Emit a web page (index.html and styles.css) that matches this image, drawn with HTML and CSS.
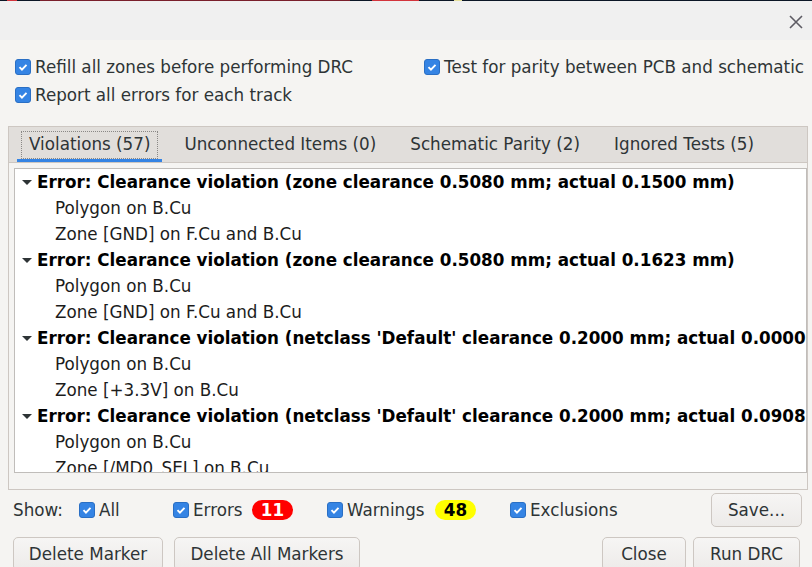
FILE: index.html
```html
<!DOCTYPE html>
<html>
<head>
<meta charset="utf-8">
<link rel="stylesheet" href="styles.css">
</head>
<body>
<div class="topline">
  <span class="seg dark" style="width:7px"></span><span class="seg red" style="width:10px"></span><span class="seg dark" style="width:23px"></span><span class="seg maroon" style="width:310px"></span><span class="seg dark" style="width:22px"></span><span class="seg red" style="width:47px"></span><span class="seg dark" style="width:35px"></span><span class="seg yellow" style="width:8px"></span><span class="seg dark fill"></span>
</div>
<div class="titlebar">
  <svg class="closex" width="14" height="14" viewBox="0 0 14 14"><path d="M1 1 L13 13 M13 1 L1 13" stroke="#5e5c64" stroke-width="1.6" fill="none"/></svg>
</div>
<div class="body">
  <div class="opts">
    <div class="optcol">
      <label class="chk"><span class="box"><svg viewBox="0 0 16 16"><path d="M4 8.2 L6.8 11 L12 5.6" stroke="#fff" stroke-width="2.2" fill="none"/></svg></span>Refill all zones before performing DRC</label>
      <label class="chk"><span class="box"><svg viewBox="0 0 16 16"><path d="M4 8.2 L6.8 11 L12 5.6" stroke="#fff" stroke-width="2.2" fill="none"/></svg></span>Report all errors for each track</label>
    </div>
    <div class="optcol right">
      <label class="chk"><span class="box"><svg viewBox="0 0 16 16"><path d="M4 8.2 L6.8 11 L12 5.6" stroke="#fff" stroke-width="2.2" fill="none"/></svg></span>Test for parity between PCB and schematic</label>
    </div>
  </div>
  <div class="notebook">
    <div class="tabs">
      <div class="tab active"><span class="focus">Violations (57)</span></div>
      <div class="tab">Unconnected Items (0)</div>
      <div class="tab">Schematic Parity (2)</div>
      <div class="tab">Ignored Tests (5)</div>
    </div>
    <div class="page">
      <div class="tree">
        <div class="row parent"><span class="arrow"></span>Error: Clearance violation (zone clearance 0.5080 mm; actual 0.1500 mm)</div>
        <div class="row child">Polygon on B.Cu</div>
        <div class="row child">Zone [GND] on F.Cu and B.Cu</div>
        <div class="row parent"><span class="arrow"></span>Error: Clearance violation (zone clearance 0.5080 mm; actual 0.1623 mm)</div>
        <div class="row child">Polygon on B.Cu</div>
        <div class="row child">Zone [GND] on F.Cu and B.Cu</div>
        <div class="row parent"><span class="arrow"></span>Error: Clearance violation (netclass 'Default' clearance 0.2000 mm; actual 0.0000 mm)</div>
        <div class="row child">Polygon on B.Cu</div>
        <div class="row child">Zone [+3.3V] on B.Cu</div>
        <div class="row parent"><span class="arrow"></span>Error: Clearance violation (netclass 'Default' clearance 0.2000 mm; actual 0.0908 mm)</div>
        <div class="row child">Polygon on B.Cu</div>
        <div class="row child">Zone [/MD0_SEL] on B.Cu</div>
      </div>
    </div>
  </div>
  <div class="showrow">
    <span class="showlbl">Show:</span>
    <label class="chk f-all"><span class="box"><svg viewBox="0 0 16 16"><path d="M4 8.2 L6.8 11 L12 5.6" stroke="#fff" stroke-width="2.2" fill="none"/></svg></span>All</label>
    <label class="chk f-err"><span class="box"><svg viewBox="0 0 16 16"><path d="M4 8.2 L6.8 11 L12 5.6" stroke="#fff" stroke-width="2.2" fill="none"/></svg></span>Errors</label>
    <span class="badge red">11</span>
    <label class="chk f-warn"><span class="box"><svg viewBox="0 0 16 16"><path d="M4 8.2 L6.8 11 L12 5.6" stroke="#fff" stroke-width="2.2" fill="none"/></svg></span>Warnings</label>
    <span class="badge yellow">48</span>
    <label class="chk f-excl"><span class="box"><svg viewBox="0 0 16 16"><path d="M4 8.2 L6.8 11 L12 5.6" stroke="#fff" stroke-width="2.2" fill="none"/></svg></span>Exclusions</label>
    <span class="spacer"></span>
    <button class="btn save">Save...</button>
  </div>
  <div class="btnrow">
    <button class="btn b-del">Delete Marker</button>
    <button class="btn b-delall">Delete All Markers</button>
    <span class="spacer"></span>
    <button class="btn b-close">Close</button>
    <button class="btn b-run">Run DRC</button>
  </div>
</div>
</body>
</html>
```
FILE: styles.css
```css
* { box-sizing: border-box; }
html, body { margin: 0; padding: 0; }
body {
  width: 812px;
  height: 567px;
  overflow: hidden;
  background: #f5f4f2;
  font-family: "DejaVu Sans", sans-serif;
  font-size: 16.75px;
  color: #2e3436;
}
.topline { display: flex; height: 1px; }
.seg { display: block; height: 1px; }
.seg.dark { background: #0b1626; }
.seg.red { background: #d3343c; }
.seg.maroon { background: #7a1f2b; }
.seg.yellow { background: #e6e09c; }
.seg.fill { flex: 1; }
.titlebar {
  height: 39px;
  background: #f0f0f0;
  display: flex;
  justify-content: flex-end;
  align-items: center;
  padding-right: 9px;
}
.closex { display: block; margin-top: 2px; }
.body { padding: 19px 4px 0 8px; }
.opts { display: flex; padding-left: 7px; }
.optcol { display: flex; flex-direction: column; gap: 12px; }
.optcol.right { margin-left: 71px; }
.chk { display: flex; align-items: center; height: 16px; line-height: 16px; white-space: nowrap; }
.box {
  width: 16px; height: 16px;
  border-radius: 3px;
  background: #3584e4;
  border: 1px solid #2a6fc4;
  margin-right: 4px;
  display: flex;
  flex-shrink: 0;
}
.box svg { width: 14px; height: 14px; margin: 0; }
.notebook {
  margin-top: 23px;
  border: 1px solid #cdc7c2;
  height: 364px;
  display: flex;
  flex-direction: column;
}
.tabs {
  height: 36px;
  background: #e1dedb;
  border-bottom: 1px solid #cdc7c2;
  display: flex;
  align-items: flex-end;
  padding-left: 8px;
}
.tab {
  height: 35px;
  padding: 0 16px 2px 17px;
  display: flex;
  align-items: center;
  color: #2e3436;
  white-space: nowrap;
}
.tab:nth-child(2) { padding-left: 22px; padding-right: 16px; }
.tab:nth-child(3) { padding-left: 18px; padding-right: 16px; }
.tab:nth-child(4) { padding-left: 18px; }
.tab.active {
  padding: 4px 4px 0 4px;
  border-bottom: 3px solid #3584e4;
  height: 35px;
  align-items: flex-start;
}
.focus {
  border: 1px dotted #8a8886;
  padding: 3px 7px 4px 7px;
  line-height: 19px;
}
.page { flex: 1; padding: 5px 0 14px 5px; }
.tree {
  background: #fff;
  border: 1px solid #c0bdba;
  height: 305px;
  overflow: hidden;
  color: #000;
}
.row { height: 26px; line-height: 26px; white-space: nowrap; display: flex; align-items: center; }
.parent { font-weight: bold; padding-left: 6px; }
.child { padding-left: 40px; color: #1c1c1c; }
.arrow {
  width: 0; height: 0;
  border-left: 5px solid transparent;
  border-right: 5px solid transparent;
  border-top: 5px solid #2e3436;
  margin-right: 5px;
  margin-left: 1px;
}
.showrow { display: flex; align-items: center; height: 38px; margin-top: 1px; padding-left: 5px; }
.showlbl { width: 66px; }
.f-all { width: 94px; }
.f-err { width: 79px; }
.f-warn { width: 108px; }
.badge {
  display: inline-block;
  height: 20px;
  line-height: 20px;
  border-radius: 10px;
  font-weight: bold;
  text-align: center;
  width: 41px;
  margin-right: 34px;
}
.badge.red { background: #ff0000; color: #fff; }
.badge.yellow { background: #ffff00; color: #000; }
.spacer { flex: 1; }
.btn {
  font-family: "DejaVu Sans", sans-serif;
  font-size: 16.75px;
  color: #2e3436;
  height: 34px;
  border: 1px solid #cdc7c2;
  border-radius: 5px;
  background: linear-gradient(#f6f5f4, #edebe9);
  padding: 0 10px;
  white-space: nowrap;
}
.save { width: 91px; margin-right: 6px; }
.btnrow { display: flex; margin-top: 8px; padding-left: 5px; }
.b-del { width: 150px; }
.b-delall { width: 186px; margin-left: 11px; }
.b-close { width: 84px; }
.b-run { width: 107px; margin-left: 7px; margin-right: 8px; }
```
